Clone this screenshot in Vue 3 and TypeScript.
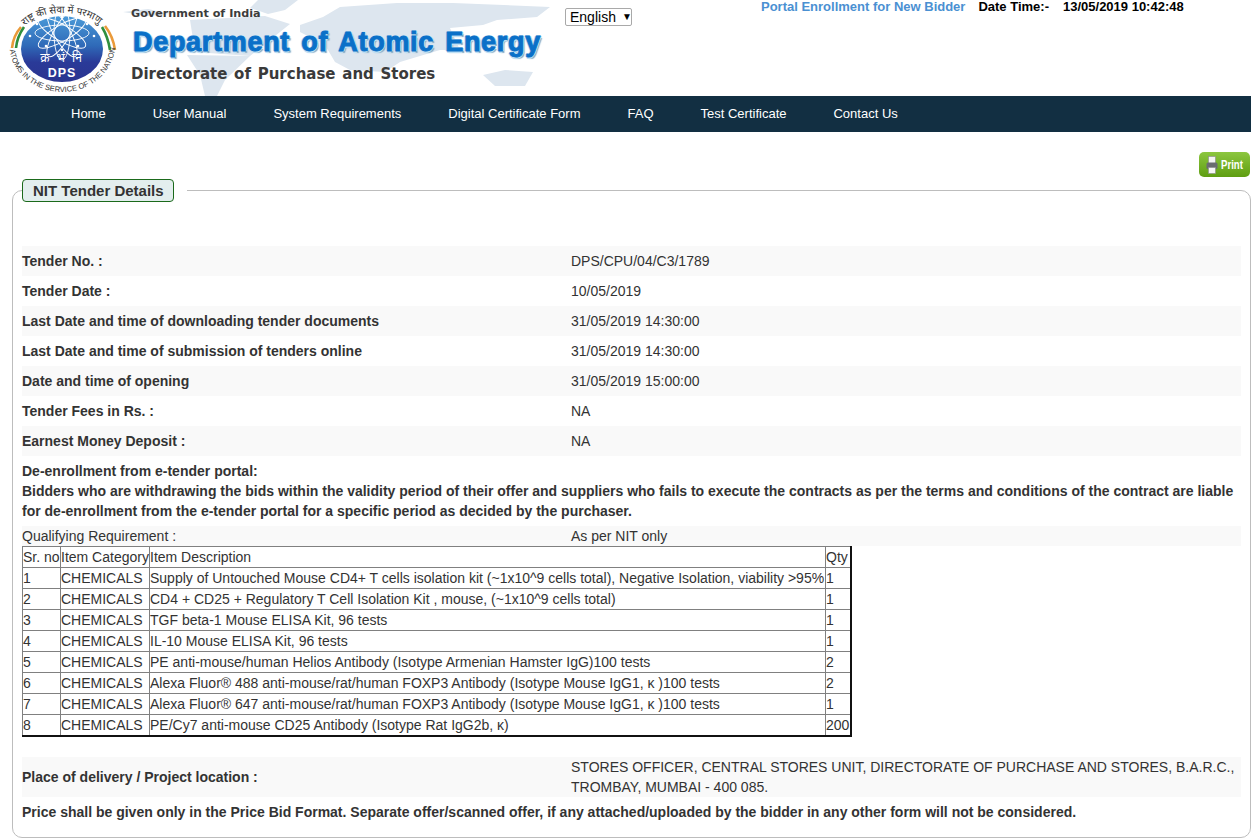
<script setup lang="ts">
const nav: string[] = ['Home', 'User Manual', 'System Requirements', 'Digital Certificate Form', 'FAQ', 'Test Certificate', 'Contact Us']
const details: [string, string][] = [
  ['Tender No. :', 'DPS/CPU/04/C3/1789'],
  ['Tender Date :', '10/05/2019'],
  ['Last Date and time of downloading tender documents', '31/05/2019 14:30:00'],
  ['Last Date and time of submission of tenders online', '31/05/2019 14:30:00'],
  ['Date and time of opening', '31/05/2019 15:00:00'],
  ['Tender Fees in Rs. :', 'NA'],
  ['Earnest Money Deposit :', 'NA'],
]
const items: [string, string, string][] = [
  ['1', 'Supply of Untouched Mouse CD4+ T cells isolation kit (~1x10^9 cells total), Negative Isolation, viability >95%', '1'],
  ['2', 'CD4 + CD25 + Regulatory T Cell Isolation Kit , mouse, (~1x10^9 cells total)', '1'],
  ['3', 'TGF beta-1 Mouse ELISA Kit, 96 tests', '1'],
  ['4', 'IL-10 Mouse ELISA Kit, 96 tests', '1'],
  ['5', 'PE anti-mouse/human Helios Antibody (Isotype Armenian Hamster IgG)100 tests', '2'],
  ['6', 'Alexa Fluor® 488 anti-mouse/rat/human FOXP3 Antibody (Isotype Mouse IgG1, κ )100 tests', '2'],
  ['7', 'Alexa Fluor® 647 anti-mouse/rat/human FOXP3 Antibody (Isotype Mouse IgG1, κ )100 tests', '1'],
  ['8', 'PE/Cy7 anti-mouse CD25 Antibody (Isotype Rat IgG2b, κ)', '200'],
]
const petals: number[] = [0, 30, 60, 90, 120, 150]
const dots: [number, number][] = [[62, 17], [37, 24], [87, 24], [30, 36], [94, 36], [46, 46], [78, 46], [62, 50]]
</script>

<template>
  <div class="page">
    <header class="top">
      <svg class="logo" viewBox="8 0 110 96" width="110" height="96">
        <defs>
          <linearGradient id="disc" x1="0" y1="0" x2="0" y2="1">
            <stop offset="0" stop-color="#4a9ad8" />
            <stop offset="0.45" stop-color="#2f6ab8" />
            <stop offset="0.7" stop-color="#2a3a98" />
            <stop offset="1" stop-color="#2b3490" />
          </linearGradient>
          <path id="arcTop" d="M17 42 C20 22 40 13 62 13 C86 13 104 22 108 40" />
          <path id="arcBot" d="M10 52 C14 76 38 92 62 92 C88 92 110 76 115 50" />
        </defs>
        <path d="M21 27 Q13 36 12 48" fill="none" stroke="#ea9a3a" stroke-width="2.6" />
        <path d="M24 27 Q17 37 16 48" fill="none" stroke="#2f8f3e" stroke-width="2.6" />
        <path d="M105 26 Q113 36 115 50" fill="none" stroke="#ea9a3a" stroke-width="2.6" />
        <path d="M102 27 Q108 37 110 50" fill="none" stroke="#2f8f3e" stroke-width="2.6" />
        <ellipse cx="62" cy="49" rx="41" ry="33" fill="url(#disc)" />
        <g fill="none" stroke="#fff" stroke-width="0.9">
          <ellipse v-for="a in petals" :key="a" cx="62" cy="33" rx="27" ry="8" :transform="`rotate(${a} 62 33)`" />
        </g>
        <g fill="#fff">
          <circle v-for="d in dots" :key="d[0] + '-' + d[1]" :cx="d[0]" :cy="d[1]" r="1.3" />
        </g>
        <text x="62" y="62" class="hin">क्र भं नि</text>
        <text x="62" y="77" class="dps">DPS</text>
        <text class="arc"><textPath href="#arcTop" startOffset="50%" text-anchor="middle">राष्ट्र की सेवा में परमाणु</textPath></text>
        <text class="arc small"><textPath href="#arcBot" startOffset="50%" text-anchor="middle">ATOMS IN THE SERVICE OF THE NATION</textPath></text>
      </svg>
      <div class="brand">
        <svg class="map" viewBox="123 0 430 96" width="430" height="96">
          <g fill="#dde6ef">
            <path d="M258 0 L298 0 L285 10 L268 14 L250 8 Z" />
            <path d="M123 12 L148 9 L170 14 L148 16 Z" />
            <path d="M190 20 L265 16 L290 24 L250 56 L195 52 Z" />
            <path d="M300 25 L323 17 L340 7 L397 3 L453 3 L550 7 L537 17 L497 20 L483 25 L450 28 L460 50 L440 50 L400 62 L385 72 L350 70 L335 62 L325 45 L300 32 Z" />
            <path d="M187 55 L250 56 L225 80 L217 96 L205 96 L200 75 Z" />
            <path d="M483 75 L505 70 L533 72 L525 86 L495 86 Z" />
          </g>
        </svg>
        <div class="gov">Government of India</div>
        <div class="dept">Department of Atomic Energy</div>
        <div class="dir">Directorate of Purchase and Stores</div>
      </div>
      <div class="lang"><span>English</span><span class="caret">▼</span></div>
      <div class="portal">
        <a>Portal Enrollment for New Bidder</a>
        <b class="dt">Date Time:-</b>
        <b class="stamp">13/05/2019 10:42:48</b>
      </div>
    </header>

    <nav class="nav">
      <a v-for="n in nav" :key="n">{{ n }}</a>
    </nav>

    <div class="toolbar">
      <div class="print">
        <svg viewBox="0 0 12 18" width="12" height="18">
          <rect x="2.5" y="0.5" width="7" height="7" fill="#f4f4f4" stroke="#8a8a8a" stroke-width="0.6" />
          <rect x="0.5" y="6.5" width="11" height="6.5" rx="1.5" fill="#6a6c70" />
          <rect x="2.5" y="11.5" width="7" height="6" fill="#f6f6f6" stroke="#8a8a8a" stroke-width="0.6" />
        </svg>
        <span>Print</span>
      </div>
    </div>

    <fieldset class="panel">
      <legend><span class="tag">NIT Tender Details</span></legend>
      <div class="spacer"></div>
      <div v-for="(d, i) in details" :key="d[0]" class="row" :class="{ shade: i % 2 === 0 }">
        <b class="label">{{ d[0] }}</b>
        <span class="val">{{ d[1] }}</span>
      </div>
      <div class="notice">
        De-enrollment from e-tender portal:<br />
        Bidders who are withdrawing the bids within the validity period of their offer and suppliers who fails to execute the contracts as per the terms and conditions of the contract are liable for de-enrollment from the e-tender portal for a specific period as decided by the purchaser.
      </div>
      <div class="qual">
        <span class="label">Qualifying Requirement :</span>
        <span class="val">As per NIT only</span>
      </div>
      <table class="items">
        <colgroup>
          <col class="c1" /><col class="c2" /><col class="c3" /><col class="c4" />
        </colgroup>
        <tbody>
          <tr><td>Sr. no</td><td>Item Category</td><td>Item Description</td><td>Qty</td></tr>
          <tr v-for="it in items" :key="it[0]">
            <td>{{ it[0] }}</td><td>CHEMICALS</td><td>{{ it[1] }}</td><td>{{ it[2] }}</td>
          </tr>
        </tbody>
      </table>
      <div class="place">
        <b class="label">Place of delivery / Project location :</b>
        <span class="val">STORES OFFICER, CENTRAL STORES UNIT, DIRECTORATE OF PURCHASE AND STORES, B.A.R.C., TROMBAY, MUMBAI - 400 085.</span>
      </div>
      <div class="price">Price shall be given only in the Price Bid Format. Separate offer/scanned offer, if any attached/uploaded by the bidder in any other form will not be considered.</div>
    </fieldset>
  </div>
</template>

<style>
html, body { margin: 0; background: #fff; }
</style>

<style scoped>
.page {
  width: 1251px;
  height: 839px;
  overflow: hidden;
  font-family: "Liberation Sans", Arial, sans-serif;
  font-size: 14px;
  color: #333;
  background: #fff;
}
.top {
  height: 96px;
  position: relative;
  display: flex;
  align-items: flex-start;
}
.logo { flex: none; width: 110px; height: 96px; margin-left: 8px; }
.hin { font-family: "Noto Sans", "DejaVu Sans", sans-serif; font-size: 12px; fill: #fff; text-anchor: middle; letter-spacing: 2px; }
.dps { font-family: "Liberation Sans", sans-serif; font-size: 12.5px; font-weight: 700; fill: #fff; text-anchor: middle; letter-spacing: 1px; }
.arc { font-family: "Noto Sans", "DejaVu Sans", sans-serif; font-size: 10px; fill: #333; }
.arc.small { font-size: 7.6px; font-family: "Liberation Sans", sans-serif; }
.brand {
  position: relative;
  flex: none;
  width: 430px;
  height: 96px;
  margin-left: 5px;
  padding-left: 8px;
  box-sizing: border-box;
}
.map { position: absolute; left: 0; top: 0; }
.gov, .dept, .dir { position: relative; white-space: nowrap; }
.gov { font: 700 11.2px/14px "DejaVu Sans", sans-serif; color: #3c3c3c; padding-top: 7px; }
.dept {
  font: 700 27px/32px "Liberation Sans", sans-serif;
  color: #0a70c8;
  letter-spacing: 0.7px;
  word-spacing: 3px;
  margin-top: 5px;
  padding-left: 2px;
  -webkit-text-stroke: 1px #0a70c8;
  text-shadow: 1.5px 0 0 #bfe0f4, -1.5px 0 0 #bfe0f4, 0 1.5px 0 #bfe0f4, 0 -1.5px 0 #bfe0f4, 2px 2px 1px #7fa9c7;
}
.dir { font: 700 15px/20px "DejaVu Sans", sans-serif; color: #3a3a3a; margin-top: 6px; word-spacing: 1.5px; }
.lang {
  flex: none;
  margin: 8px 0 0 12px;
  width: 67px;
  height: 18px;
  box-sizing: border-box;
  border: 1px solid #a9a9a9;
  border-radius: 2px;
  color: #000;
  line-height: 16px;
  padding-left: 4px;
  display: flex;
  gap: 6px;
}
.caret { font-size: 10px; }
.portal {
  position: absolute;
  top: 0;
  left: 761px;
  white-space: nowrap;
  line-height: 14px;
  font-size: 12px;
  color: #000;
}
.portal a { font-weight: 700; font-size: 13px; color: #4a90d2; }
.dt { margin-left: 13px; font-size: 13px; }
.stamp { margin-left: 14px; font-size: 13px; }
.nav {
  height: 36px;
  box-sizing: border-box;
  padding: 0 0 2px 71px;
  background: #122f42;
  display: flex;
  align-items: center;
  gap: 47px;
}
.nav a { color: #fff; font-size: 13px; }
.toolbar {
  display: flex;
  justify-content: flex-end;
  padding: 20px 1px 0 0;
  height: 27px;
}
.print {
  width: 51px;
  height: 25px;
  box-sizing: border-box;
  border-radius: 5px;
  background: linear-gradient(#8cc63f, #5f9e12);
  display: flex;
  align-items: center;
  gap: 3px;
  padding-left: 7px;
  color: #fff;
  font: 700 12px "Liberation Sans", sans-serif;
}
.print span { display: inline-block; transform: scaleX(0.8); transform-origin: left center; }
.panel {
  margin: 0 0 0 12px;
  padding: 0 9px;
  border: 1px solid #bdbdbd;
  border-radius: 10px;
  min-width: 0;
  height: 659px;
  box-sizing: border-box;
}
legend {
  box-sizing: border-box;
  width: 165px;
  height: 23px;
  padding: 0;
  margin: 0;
  text-align: left;
}
.tag {
  display: block;
  box-sizing: border-box;
  width: 152px;
  height: 23px;
  padding-left: 10px;
  border: 1px solid #1b6a1b;
  border-radius: 4px;
  background: #e3eeee;
  color: #333;
  font-weight: 700;
  font-size: 15px;
  line-height: 21px;
}
.spacer { height: 44px; }
.row {
  display: flex;
  height: 30px;
  align-items: center;
}
.shade { background: #f9f9f9; }
.label { flex: none; width: 549px; }
.val { flex: 1; }
.notice {
  font-weight: 700;
  line-height: 20px;
  padding-top: 5px;
  height: 65px;
  box-sizing: content-box;
}
.qual { display: flex; height: 20px; line-height: 21px; background: #f9f9f9; margin-top: 0; }
.items {
  border-collapse: collapse;
  table-layout: fixed;
  width: 828px;
  border: 1px solid #111;
  border-right-width: 2px;
  border-bottom-width: 2px;
}
.c1 { width: 38px; } .c2 { width: 89px; } .c3 { width: 676px; } .c4 { width: 25px; }
.items td {
  border: 1px solid #808080;
  padding: 1px 0 0;
  height: 19px;
  line-height: 19px;
  white-space: nowrap;
  overflow: hidden;
}
.place {
  display: flex;
  align-items: center;
  height: 40px;
  line-height: 20px;
  margin-top: 20px;
  background: #f9f9f9;
}
.price { font-weight: 700; line-height: 20px; margin-top: 5px; }
</style>
